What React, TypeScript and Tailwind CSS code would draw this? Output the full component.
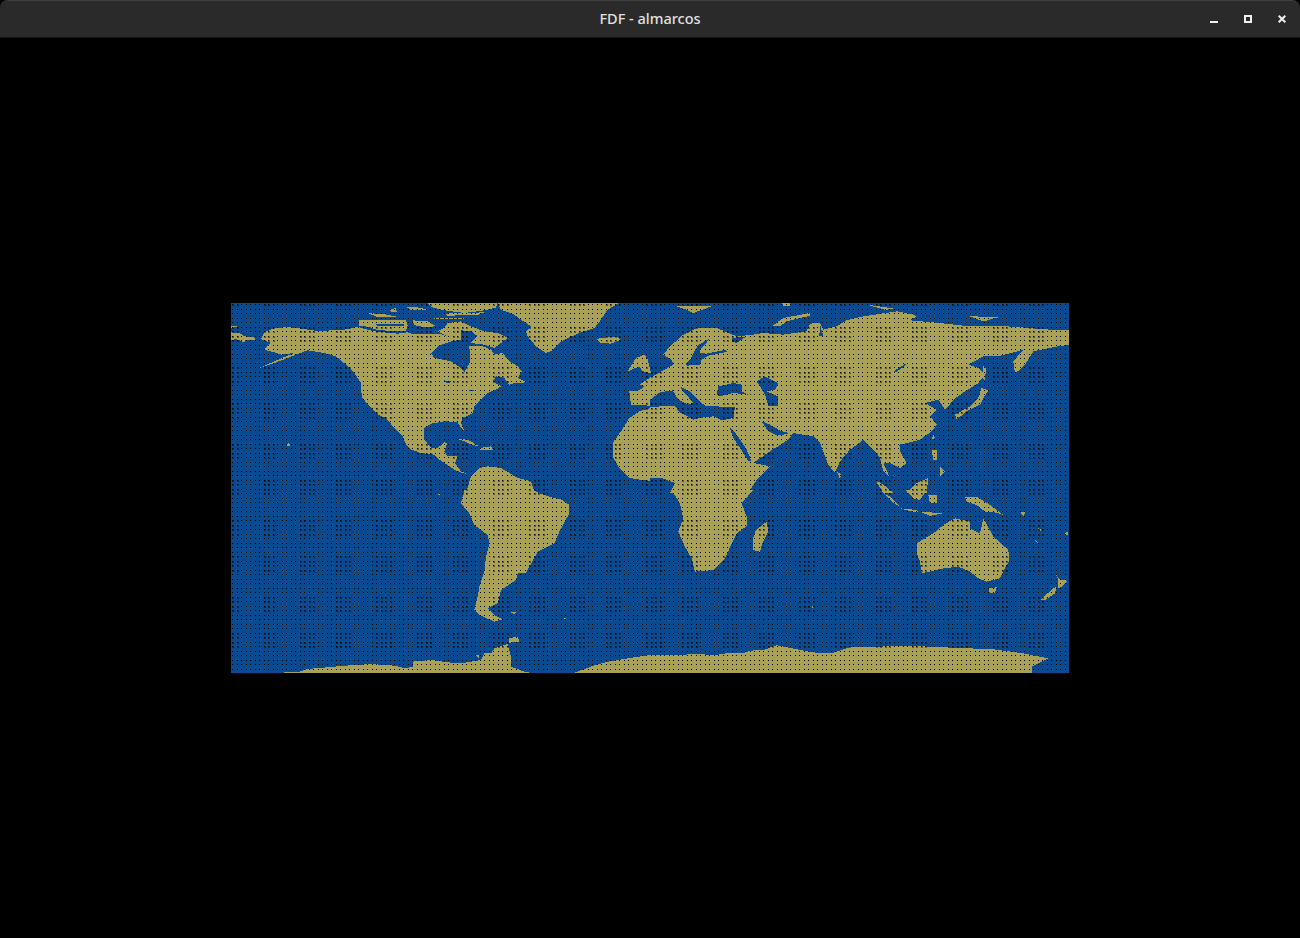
const LAND = '#a8a156';
const SEA = '#0a4a90';

type Quadrant = { dx: number; dy: number; land: string[]; water: string[] };

// traced at 3x, one block per corner of the map
const quadrants: Quadrant[] = [
  {
    dx: 0,
    dy: 0,
    land: [
      '0,88 25,90 40,100 70,102 72,110 45,110 40,118 15,108 0,112',
      '0,70 18,70 18,73 0,74',
      '100,88 130,76 165,72 195,75 230,80 270,85 300,82 340,80 380,72 430,85 500,92 530,88 540,92 590,92 625,92 650,100 660,115 625,128 600,150 610,165 660,175 690,195 700,207 718,175 715,130 750,128 780,140 790,155 815,150 835,175 860,190 872,205 860,225 890,238 850,240 835,245 820,225 795,220 785,235 810,250 795,260 770,270 745,295 730,310 725,330 695,345 690,360 700,385 690,375 680,357 640,355 600,362 580,375 580,410 600,435 620,435 640,418 648,422 640,445 650,460 680,458 672,480 690,505 715,515 695,510 670,500 655,490 625,470 610,455 570,450 540,440 525,425 515,400 490,375 465,345 440,335 410,305 392,280 390,240 370,210 345,185 315,160 280,150 230,142 195,155 170,165 130,180 85,195 130,175 170,158 190,150 150,155 130,148 100,140 120,120 90,108',
      '385,52 440,50 525,52 530,68 525,84 440,82 415,72 385,68',
      '650,60 690,55 720,70 760,85 800,90 830,105 810,120 790,135 760,125 720,120 740,100 720,85 690,82 690,110 660,115 650,100 620,85 640,75',
      '590,0 800,0 795,14 760,22 700,30 640,22 600,12',
      '610,45 700,45 700,49 610,49',
      '640,32 760,28 740,36 650,38',
      '410,30 470,35 500,42 440,42',
      '527,12 570,14 585,20 540,22',
      '475,18 495,16 497,26 480,26',
      '545,52 590,55 615,70 575,72 550,66',
      '800,0 1165,0 1130,20 1110,50 1090,75 1040,92 990,115 960,145 945,150 915,130 890,100 885,85 900,70 870,50 850,35 810,20',
      '1095,108 1130,103 1160,103 1170,112 1140,122 1110,120',
      '1190,205 1215,165 1240,155 1250,170 1260,210 1235,205 1225,190',
      '1195,265 1225,262 1240,250 1225,245 1260,222 1260,310 1235,305 1200,305',
      '1260,315 1225,325 1195,345 1170,385 1145,420 1145,460 1165,495 1195,525 1260,535',
      '680,408 710,410 745,430 720,425 700,415',
      '745,435 780,430 785,440 750,442',
      '165,425 175,420 178,430 170,430',
      '705,570 720,520 745,495 770,490 810,495 860,525 900,535 912,570',
    ],
    water: [
      '460,345 475,360 500,400 490,395 470,370',
      '640,232 660,235 655,240 642,238',
      '715,262 730,262 728,265 716,265',
      '530,60 545,55 550,85 535,85',
      '430,62 520,64 520,68 440,68',
    ],
  },
  {
    dx: 419,
    dy: 0,
    land: [
      '0,225 35,205 70,185 65,170 40,155 60,130 100,95 140,75 200,75 260,100 310,95 340,90 400,95 470,85 480,62 510,60 520,80 560,70 590,52 640,40 740,25 790,35 800,40 780,52 870,60 940,68 1040,68 1100,72 1200,80 1260,82 1260,125 1225,130 1150,145 1125,185 1095,212 1090,175 1120,140 1085,150 1050,158 1000,160 955,185 985,195 1005,215 985,240 945,265 910,290 895,310 885,320 865,290 825,300 860,320 840,340 860,365 845,385 810,410 780,418 748,425 750,445 770,480 750,495 720,480 700,480 720,525 700,505 690,465 670,440 640,410 600,440 570,475 555,510 535,485 510,420 490,400 430,390 415,410 360,445 310,480 360,490 320,530 295,570 0,570',
      '365,70 400,45 480,30 480,38 410,55 390,70',
      '80,10 190,8 130,30 110,20',
      '960,40 1050,42 1000,55',
      '650,5 700,12 740,18 705,20',
      '395,0 420,0 420,8 400,8',
      '915,335 960,310 985,285 995,255 1015,262 1000,285 990,305 950,325 920,350',
      '1000,190 1008,195 1005,232 998,225',
      '560,505 575,515 570,527',
      '850,395 855,405 845,410',
      '845,440 860,440 860,470 850,470',
      '870,490 885,505 870,520',
      '675,530 700,545 730,570 700,570',
      '770,570 800,540 835,525 830,570',
    ],
    water: [
      '105,183 120,170 130,150 145,125 178,108 165,125 152,138 150,150 170,152 228,140 230,147 175,158 155,170 150,185 110,188',
      '245,105 290,100 260,120 245,115',
      '510,65 520,100 505,100 510,85',
      '200,275 205,250 250,240 275,245 275,265 295,275 250,270 210,280',
      '320,235 345,220 385,240 375,260 350,265 385,280 385,310 355,310 345,275',
      '0,312 75,308 85,325 130,350 145,345 190,340 215,352 250,345 255,312 190,310 165,308 150,295 120,265 90,250 100,265 130,300 115,305 85,290 68,262 30,268 0,290',
      '238,372 260,395 290,440 305,475 295,475 270,435 250,405',
      '335,355 360,365 395,385 420,390 400,395 375,395 355,385',
      '0,525 35,525 75,540 60,570 0,570',
      '730,205 770,180 768,186 738,208',
    ],
  },
  {
    dx: 0,
    dy: 187,
    land: [
      '700,0 690,40 715,70 730,105 770,135 775,160 765,200 760,245 745,290 740,320 730,360 745,375 790,395 815,388 790,375 770,355 800,340 810,300 855,270 860,250 885,248 920,185 970,160 985,125 1015,70 1015,45 990,28 960,22 930,12 905,0',
      '838,368 855,365 852,372',
      '995,384 1010,386 1005,388',
      '155,552 160,545 205,545 230,537 310,530 370,525 420,522 490,527 525,535 545,530 545,515 600,510 660,518 690,520 750,510 760,490 780,490 790,475 830,462 840,500 840,530 880,545 915,552',
      '1020,552 1085,528 1130,515 1190,505 1260,495 1260,552',
      '835,445 860,440 865,455 835,458',
      '730,495 745,495 745,505',
      '620,12 628,10 625,15',
    ],
    water: [],
  },
  {
    dx: 419,
    dy: 187,
    land: [
      '65,0 90,40 100,85 85,125 105,170 125,205 135,245 190,240 225,205 250,150 260,130 290,108 290,80 275,40 310,0',
      '350,95 355,125 335,165 330,185 310,180 308,150 318,120',
      '800,160 850,130 880,105 915,85 960,95 960,115 990,130 1000,85 1030,140 1075,180 1078,210 1050,265 1010,275 985,265 960,245 925,230 880,235 815,250 810,215 800,190',
      '1015,295 1040,292 1035,310 1020,310',
      '1170,330 1210,295 1220,290 1215,310 1185,330',
      '1215,250 1230,270 1252,272 1235,290 1225,295 1225,270',
      '945,20 980,20 1020,45 1060,75 1040,68 1005,65 980,45 950,35',
      '690,0 720,20 750,50 725,35 700,10',
      '750,55 800,60 805,68 775,62',
      '810,65 880,70 840,78',
      '765,0 830,0 810,30 790,25',
      '835,15 860,15 860,40 840,40',
      '1110,68 1128,65 1120,78',
      '1165,115 1178,120 1170,122',
      '1152,148 1168,160 1160,158',
      '1245,128 1255,125 1255,135 1245,135',
      '486,348 494,352 488,356',
      '0,495 95,495 130,492 200,495 240,488 280,490 300,482 340,480 380,466 440,478 510,490 545,490 600,472 670,470 790,468 880,472 1030,478 1120,490 1195,505 1165,520 1145,530 1145,552 0,552',
      '1170,548 1235,548 1235,552 1170,552',
    ],
    water: [],
  },
];

// the holes in the mesh, plus the fainter blobs where the grid beats against the pixels
function meshDots() {
  let dots = '';
  let blobs = '';
  for (let row = 0; row < 82; row++) {
    for (let col = 0; col < 186; col++) {
      const x = Math.round(1 + col * 4.5);
      const y = Math.round(1 + row * 4.5);
      const px = (((x - 37 + 19) % 38.4) + 38.4) % 38.4;
      const py = (((y - 108 + 19) % 38.4) + 38.4) % 38.4;
      dots += `M${x} ${y}h1v1h-1z`;
      if (Math.abs(px - 19) < 9 && Math.abs(py - 19) < 9) blobs += `M${x} ${y}h2v2h-2z`;
    }
  }
  return { dots, blobs };
}

const mesh = meshDots();

function WorldMap() {
  return (
    <svg width="838" height="370" viewBox="0 0 838 370" shapeRendering="crispEdges" className="block">
      <rect width="838" height="370" fill={SEA} />
      {quadrants.map((q) => (
        <g key={`${q.dx}-${q.dy}`} transform={`translate(${q.dx} ${q.dy}) scale(${1 / 3})`}>
          {q.land.map((points) => (
            <polygon key={points} points={points} fill={LAND} />
          ))}
          {q.water.map((points) => (
            <polygon key={points} points={points} fill={SEA} />
          ))}
        </g>
      ))}
      <path d={mesh.blobs} fill="#000" fillOpacity="0.45" />
      <path d={mesh.dots} fill="#000" />
    </svg>
  );
}

function TitleBar() {
  return (
    <header className="grid h-[38px] shrink-0 grid-cols-[1fr_auto_1fr] items-center rounded-t-[8px] border-t border-b border-t-[#3f3f3f] border-b-[#141414] bg-[#2a2a2a] pb-[1px]">
      <div />
      <h1 className="mt-[1px] text-[14.5px] font-medium text-[#e0e0e0] [font-family:'Noto_Sans',sans-serif]">FDF - almarcos</h1>
      <div className="flex items-center justify-end gap-[26px] pr-[14px]">
        <svg width="8" height="8" viewBox="0 0 8 8" aria-hidden="true">
          <rect x="0" y="6" width="8" height="2" fill="#f0f0f0" />
        </svg>
        <svg width="8" height="8" viewBox="0 0 8 8" aria-hidden="true">
          <path d="M1 1h6v6h-6z" fill="none" stroke="#f0f0f0" strokeWidth="2" />
        </svg>
        <svg width="8" height="8" viewBox="0 0 8 8" aria-hidden="true">
          <path d="M.7.7l6.6 6.6M7.3.7l-6.6 6.6" fill="none" stroke="#f0f0f0" strokeWidth="2" />
        </svg>
      </div>
    </header>
  );
}

export default function App() {
  return (
    <div className="flex h-[938px] w-[1300px] flex-col overflow-hidden bg-black">
      <TitleBar />
      <main className="flex flex-1 items-center justify-center bg-black">
        <WorldMap />
      </main>
    </div>
  );
}
